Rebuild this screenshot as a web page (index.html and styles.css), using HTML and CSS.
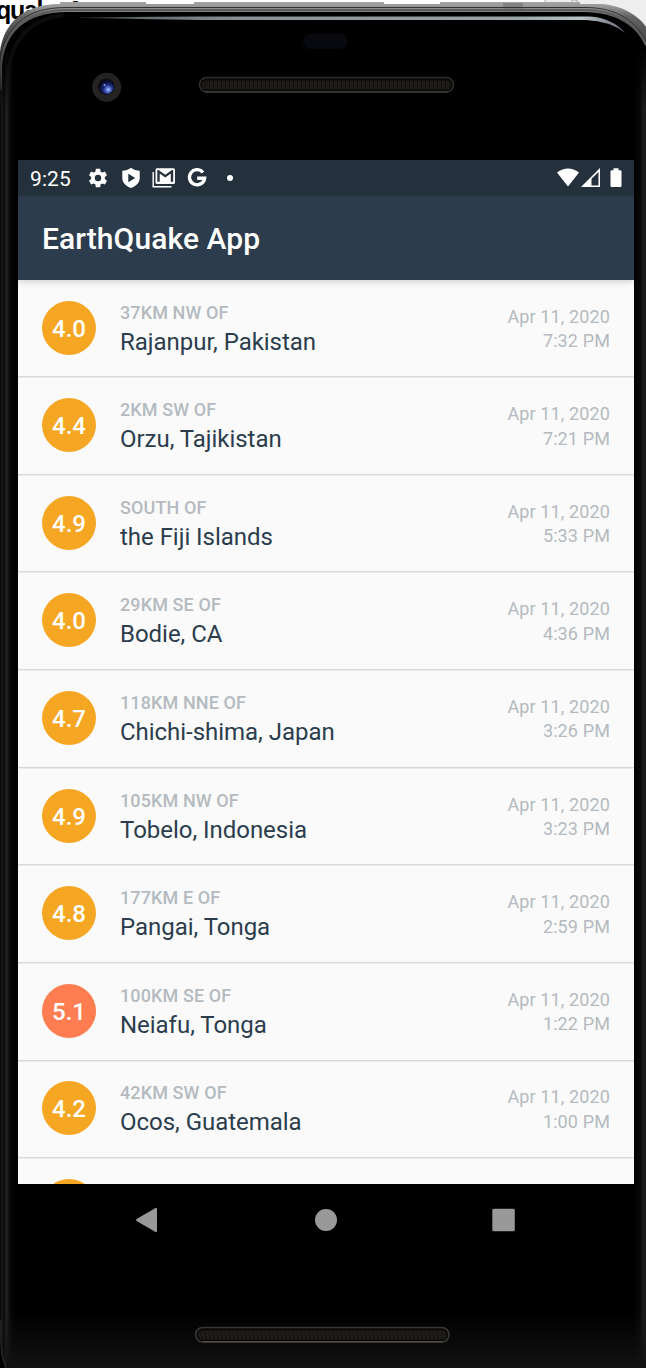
FILE: index.html
```html
<!DOCTYPE html>
<html lang="en">
<head>
<meta charset="utf-8">
<title>EarthQuake App</title>
<link rel="stylesheet" href="styles.css">
</head>
<body>
<div class="stage">
  <div class="behind">quake App</div>
  <svg class="shell" width="646" height="1368" viewBox="0 0 646 1368" aria-hidden="true">
    <defs>
      <linearGradient id="rim" x1="0" y1="0" x2="0" y2="1368" gradientUnits="userSpaceOnUse">
        <stop offset="0" stop-color="#a9a9a9"/><stop offset=".005" stop-color="#969696"/><stop offset=".012" stop-color="#656565"/><stop offset=".04" stop-color="#333"/><stop offset=".08" stop-color="#171717"/><stop offset="1" stop-color="#101010"/>
      </linearGradient>
      <linearGradient id="gloss" x1="80" y1="0" x2="626" y2="0" gradientUnits="userSpaceOnUse">
        <stop offset="0" stop-color="#1b2020"/><stop offset=".12" stop-color="#667072"/><stop offset=".3" stop-color="#889294"/><stop offset=".8" stop-color="#9aa5a5"/><stop offset=".92" stop-color="#b8c4c5"/><stop offset="1" stop-color="#667"/>
      </linearGradient>
      <linearGradient id="sideL" x1="0" y1="0" x2="18" y2="0" gradientUnits="userSpaceOnUse">
        <stop offset="0" stop-color="#030303"/><stop offset=".09" stop-color="#191919"/><stop offset=".22" stop-color="#0b0b0b"/><stop offset=".36" stop-color="#222"/><stop offset=".55" stop-color="#0a0a0a"/><stop offset=".8" stop-color="#000"/>
      </linearGradient>
      <linearGradient id="sideR" x1="634" y1="0" x2="646" y2="0" gradientUnits="userSpaceOnUse">
        <stop offset="0" stop-color="#000"/><stop offset=".5" stop-color="#080808"/><stop offset=".75" stop-color="#1a1a19"/><stop offset="1" stop-color="#1b1a19"/>
      </linearGradient>
      <linearGradient id="chin" x1="0" y1="1310" x2="0" y2="1368" gradientUnits="userSpaceOnUse">
        <stop offset="0" stop-color="#111" stop-opacity="0"/><stop offset="1" stop-color="#121212"/>
      </linearGradient>
      <linearGradient id="fade" x1="0" y1="45" x2="0" y2="110" gradientUnits="userSpaceOnUse">
        <stop offset="0" stop-color="#000"/><stop offset="1" stop-color="#fff"/>
      </linearGradient>
      <mask id="fadeTop" maskUnits="userSpaceOnUse" x="0" y="0" width="646" height="1368"><path d="M0 0h646v1368H0z" fill="url(#fade)"/></mask>
      <radialGradient id="lens" cx=".62" cy=".68" r=".6">
        <stop offset="0" stop-color="#b5c9ff"/><stop offset=".25" stop-color="#5a77d6"/><stop offset=".55" stop-color="#1c2c7a"/><stop offset="1" stop-color="#090c25"/>
      </radialGradient>
      <pattern id="mesh" width="4" height="2" patternUnits="userSpaceOnUse">
        <path d="M0 0h4v2H0z" fill="#13110e"/><path d="M0 0h1v1H0zM2 1h1v1H2z" fill="#2b2721"/><path d="M3 0h1v2H3z" fill="#1d1a16"/>
      </pattern>
    </defs>
    <path d="M545 0h101v60h-60z" fill="#eee"/>
    <path d="M545 0v4M572 3V0h5v3" stroke="#aaa" fill="none"/>
    <path d="M0 1368V52C3 25 22 4 60 4V2h86v2h48V2h190v2h56V2h140v2h20C626 5 642 20 646 27V1368z" fill="url(#rim)"/>
    <path d="M503 3h20v9h-20z" fill="#777" opacity=".7"/>
    <path d="M0 60C5 28 24 7.500 66 7.500H586C617 7.500 638 22 646 43" fill="none" stroke="#333" stroke-width="1"/>
    <path d="M1 1368V66C3 34 24 12 68 12H584C616 12 637 26 646 47V1368z" fill="#000"/>
    <path d="M1 90V66C3 34 24 10 68 10H584C616 10 637 24 646 45" fill="none" stroke="#5c5c5c" stroke-width="2"/>
    <path d="M9 110V70C11 44 27 19 64 15" fill="none" stroke="#0c0c0c" stroke-width="4"/>
    <g mask="url(#fadeTop)">
      <path d="M0 40h18v1328H0z" fill="url(#sideL)"/>
      <path d="M634 40h12v1328h-12z" fill="url(#sideR)"/>
    </g>
    <path d="M6 1310h640v58H6z" fill="url(#chin)"/>
    <path d="M1 1320V1342Q2 1358 6 1368" fill="none" stroke="#2a2f30"/>
    <path d="M0 1348Q2 1362 5 1368H0z" fill="#000"/>
    <path d="M80 17.300L200 16.500H590Q612 18 625.500 33Q610 21 586 20H200L80 18z" fill="url(#gloss)"/>
    <rect x="303" y="33.500" width="44.500" height="15.500" rx="7.700" fill="#08090e"/>
    <circle cx="106.700" cy="87.300" r="14.500" fill="#242322"/>
    <circle cx="106.200" cy="86.700" r="8.300" fill="#0a0b14"/>
    <circle cx="106.500" cy="87" r="7.200" fill="url(#lens)"/>
    <circle cx="104.500" cy="85" r="1" fill="#86a0ff"/>
    <rect x="199.500" y="77.500" width="254" height="14.500" rx="7.200" fill="#0b0a09" stroke="#2e2d2b" stroke-width="1.500"/>
    <path d="M205 92H448" stroke="#4b4843"/>
    <rect x="202" y="80.500" width="249" height="9" rx="4.500" fill="url(#mesh)"/>
    <rect x="195.500" y="1327.500" width="253.500" height="14.500" rx="7.200" fill="#0b0a09" stroke="#383735" stroke-width="1.500"/>
    <path d="M202 1341.800H443" stroke="#5c5a55"/>
    <rect x="198" y="1330.500" width="248.500" height="9" rx="4.500" fill="url(#mesh)"/>
  </svg>

  <main class="screen">
    <div class="status">
      <span class="clock">9:25</span>
      <div class="notices">
        <svg width="22" height="22" viewBox="0 0 24 24"><path fill="#fff" d="M19.430 12.980c.040-.320.070-.640.070-.980s-.030-.660-.070-.980l2.110-1.650a.5.500 0 0 0 .120-.640l-2-3.460a.5.500 0 0 0-.610-.220l-2.490 1a7.300 7.300 0 0 0-1.690-.980l-.380-2.650A.49.490 0 0 0 14 2h-4a.49.490 0 0 0-.490.420l-.380 2.650c-.610.250-1.170.590-1.690.980l-2.490-1a.49.490 0 0 0-.610.220l-2 3.460a.49.490 0 0 0 .120.640l2.110 1.650c-.040.320-.070.650-.070.980s.030.660.070.980l-2.110 1.650a.5.500 0 0 0-.120.640l2 3.460c.120.220.390.300.610.220l2.490-1c.520.400 1.080.730 1.690.980l.380 2.650c.030.240.240.420.490.420h4c.250 0 .460-.180.490-.420l.380-2.650a7.300 7.300 0 0 0 1.690-.980l2.490 1c.230.090.490 0 .610-.220l2-3.460a.5.500 0 0 0-.120-.640zM12 15.500a3.500 3.500 0 1 1 0-7 3.500 3.500 0 0 1 0 7z"/></svg>
        <svg width="22" height="22" viewBox="0 0 22 22"><path fill="#fff" fill-rule="evenodd" d="M11 .8C8.500 2.800 5.500 3.700 2.300 3.800V11c0 4.700 3.400 8 8.700 10 5.300-2 8.700-5.300 8.700-10V3.800C16.500 3.700 13.500 2.800 11 .8zM8.300 6.700v8.600l6.900-4.300z"/></svg>
        <svg class="mail" width="24" height="20" viewBox="0 0 24 20"><path fill="none" stroke="#fff" stroke-width="1.400" d="M1.200 4v14.800h18.300"/><path fill="#fff" fill-rule="evenodd" d="M5 .3H21.500q1.500 0 1.500 1.500v12.700q0 1.500-1.500 1.500H5Q3.500 16 3.500 14.500V1.800Q3.500 .3 5 .3zM5.300 2V13.800H7.700V5.500l5.550 4.100 5.550-4.100v8.300H21.200V2H20l-6.750 4.800L6.500 2z"/></svg>
        <svg width="20" height="20" viewBox="0 0 20 20"><path fill="none" stroke="#fff" stroke-width="3.400" d="M16 4.500A7.600 7.600 0 1 0 17.600 10.300H10.200"/></svg>
        <i class="dot"></i>
      </div>
      <div class="signals">
        <svg width="66" height="20" viewBox="0 0 66 20"><path fill="#fff" d="M0 4.500Q11 -3.500 22 4.500L11 18.500z"/><path fill="#fff" fill-rule="evenodd" d="M24 19 43 0v19zM34.500 10.800v6.700h7V4z"/><path fill="#fff" d="M56.500 .2h5v2h1.800q1.200 0 1.200 1.200v14.400q0 1.200-1.200 1.200h-8.600q-1.200 0-1.200-1.200V3.400q0-1.200 1.200-1.200h1.800z"/></svg>
      </div>
    </div>
    <header class="appbar"><h1>EarthQuake App</h1></header>
    <div class="list">
      <article class="quake"><b class="mag">4.0</b><div class="place"><span>37KM NW OF</span><strong>Rajanpur, Pakistan</strong></div><div class="when"><span>Apr 11, 2020</span><span>7:32 PM</span></div></article>
      <article class="quake"><b class="mag">4.4</b><div class="place"><span>2KM SW OF</span><strong>Orzu, Tajikistan</strong></div><div class="when"><span>Apr 11, 2020</span><span>7:21 PM</span></div></article>
      <article class="quake"><b class="mag">4.9</b><div class="place"><span>SOUTH OF</span><strong>the Fiji Islands</strong></div><div class="when"><span>Apr 11, 2020</span><span>5:33 PM</span></div></article>
      <article class="quake"><b class="mag">4.0</b><div class="place"><span>29KM SE OF</span><strong>Bodie, CA</strong></div><div class="when"><span>Apr 11, 2020</span><span>4:36 PM</span></div></article>
      <article class="quake"><b class="mag">4.7</b><div class="place"><span>118KM NNE OF</span><strong>Chichi-shima, Japan</strong></div><div class="when"><span>Apr 11, 2020</span><span>3:26 PM</span></div></article>
      <article class="quake"><b class="mag">4.9</b><div class="place"><span>105KM NW OF</span><strong>Tobelo, Indonesia</strong></div><div class="when"><span>Apr 11, 2020</span><span>3:23 PM</span></div></article>
      <article class="quake"><b class="mag">4.8</b><div class="place"><span>177KM E OF</span><strong>Pangai, Tonga</strong></div><div class="when"><span>Apr 11, 2020</span><span>2:59 PM</span></div></article>
      <article class="quake"><b class="mag strong">5.1</b><div class="place"><span>100KM SE OF</span><strong>Neiafu, Tonga</strong></div><div class="when"><span>Apr 11, 2020</span><span>1:22 PM</span></div></article>
      <article class="quake"><b class="mag">4.2</b><div class="place"><span>42KM SW OF</span><strong>Ocos, Guatemala</strong></div><div class="when"><span>Apr 11, 2020</span><span>1:00 PM</span></div></article>
      <article class="quake"><b class="mag"></b></article>
    </div>
    <nav class="keys">
      <svg width="24" height="26" viewBox="0 0 24 26"><path fill="#999" d="M21.500 1Q23 .500 23 2v22q0 1.500-1.500 1L2.600 14Q1.300 13 2.600 12z"/></svg>
      <svg class="home" width="24" height="24" viewBox="0 0 24 24"><circle cx="12" cy="12" r="11" fill="#999"/></svg>
      <svg width="24" height="24" viewBox="0 0 24 24"><rect x=".3" y=".8" width="22.500" height="22.500" rx="1.500" fill="#999"/></svg>
    </nav>
  </main>
</div>
</body>
</html>
```
FILE: styles.css
```css
* { box-sizing: border-box; }
body { margin: 0; background: #fff; font-family: Roboto, "Liberation Sans", sans-serif; }
svg { display: block; flex: none; }
.stage { position: relative; width: 646px; height: 1368px; overflow: hidden; padding: 160px 12px 0 18px; }
.behind { position: absolute; left: -4px; top: -4px; font: bold 25px/28px "Liberation Sans", sans-serif; letter-spacing: -1.3px; color: #000; white-space: nowrap; }
.shell { position: absolute; left: 0; top: 0; }
.screen { position: relative; width: 616px; }

.status { height: 36px; background: #24303c; display: flex; align-items: center; padding: 0 11px 0 12px; color: #fff; }
.clock { font-size: 21px; line-height: 36px; width: 57px; padding-top: 1px; letter-spacing: .1px; }
.notices { display: flex; align-items: center; gap: 11px; }
.mail { margin-left: -1px; }
.dot { width: 6px; height: 6px; border-radius: 50%; background: #fff; margin-left: 9px; }
.signals { margin-left: auto; }

.appbar { position: relative; z-index: 1; height: 84px; background: #2c3c4c; padding: 0 24px; display: flex; align-items: center; box-shadow: 0 2px 6px rgba(0, 0, 0, .16); clip-path: inset(0 0 -9px 0); }
.appbar h1 { margin: 2px 0 0; font-size: 30px; line-height: 36px; letter-spacing: .1px; font-weight: 500; color: #fff; }

.list { height: 904px; overflow: hidden; background: #fafafa; }
.quake { height: 97.625px; display: flex; align-items: flex-start; padding: 20.900px 24px 0; border-bottom: 1px solid #d8d8d8; box-shadow: 0 1px #ececec; }
.quake:first-child { height: 97.200px; padding-top: 20.500px; }
.mag { width: 54px; height: 54px; border-radius: 50%; background: #f5a623; color: #fff; font-size: 24px; font-weight: 500; line-height: 56px; text-align: center; flex: none; }
.mag.strong { background: #ff7d50; }
.place { display: flex; flex-direction: column; margin-left: 24px; flex: 1; }
.place span { font-size: 18px; line-height: 21px; margin-top: 1px; letter-spacing: .11px; font-weight: 500; color: #b4bac0; }
.place strong { font-size: 24px; line-height: 28px; margin-top: 5px; letter-spacing: -.03px; font-weight: 400; color: #2b3d4d; }
.when { display: flex; flex-direction: column; align-items: flex-end; font-size: 18px; line-height: 24.500px; letter-spacing: .12px; padding-top: 4px; color: #b4bac0; }

.keys { height: 72px; display: flex; align-items: center; justify-content: space-between; padding: 0 118px 0 116px; }
.home { margin-left: 2px; }
```
